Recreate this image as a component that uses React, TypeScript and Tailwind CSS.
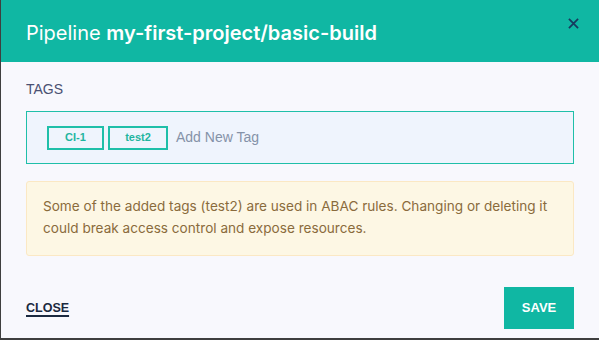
import React from "react";

export default function App() {
  return (
    <div className="w-[599px] h-[340px] bg-[#3f3f3f] overflow-hidden">
      <div className="ml-[1px] w-[598px] h-[338px] bg-[#f8f8fd] flex flex-col">
        <div className="h-[62px] bg-[#10b7a3] flex items-start justify-between pl-[25px] pr-[20px]">
          <div className="mt-[19px] text-[20px] leading-[28px] text-white" style={{ fontFamily: "Inter, sans-serif" }}>
            Pipeline <span className="font-semibold">my-first-project/basic-build</span>
          </div>
          <svg className="mt-[18px]" width="11" height="11" viewBox="0 0 12 12" fill="none">
            <path d="M1 1L11 11M11 1L1 11" stroke="#173a5e" strokeWidth="1.9" />
          </svg>
        </div>
        <div className="flex-1 px-[25px] pt-[19px] flex flex-col" style={{ fontFamily: "Inter, sans-serif" }}>
          <div className="text-[14px] leading-[16px] text-[#4a5072]" style={{ fontFamily: "'Liberation Sans', sans-serif" }}>TAGS</div>
          <div className="mt-[14px] h-[53px] border border-[#1fbfa9] bg-[#eff4fd] flex items-center pl-[20px] gap-[4px]" style={{ fontFamily: "'Liberation Sans', sans-serif" }}>
            <span className="w-[57px] h-[24px] border-2 border-[#1fbfa9] flex items-center justify-center text-[11px] font-bold text-[#1fb5a0]">CI-1</span>
            <span className="w-[60px] h-[24px] border-2 border-[#1fbfa9] flex items-center justify-center text-[11px] font-bold text-[#1fb5a0]">test2</span>
            <span className="ml-[4px] text-[14px] text-[#8592a8]">Add New Tag</span>
          </div>
          <div className="mt-[17px] h-[75px] rounded-[3px] border border-[#fbe8c4] bg-[#fdf7e4] px-[16px] pt-[13px] text-[13.6px] leading-[22px] text-[#8a6b3c]">
            Some of the added tags (test2) are used in ABAC rules. Changing or deleting it could break access control and expose resources.
          </div>
          <div className="mt-[31px] flex items-center justify-between">
            <span className="text-[12.5px] font-bold text-[#1b2940] underline underline-offset-[3px] decoration-[1.5px]" style={{ fontFamily: "'Liberation Sans', sans-serif" }}>CLOSE</span>
            <button className="w-[70px] h-[42px] bg-[#10b7a3] text-white text-[13px] font-bold" style={{ fontFamily: "'Liberation Sans', sans-serif" }}>SAVE</button>
          </div>
        </div>
      </div>
    </div>
  );
}
